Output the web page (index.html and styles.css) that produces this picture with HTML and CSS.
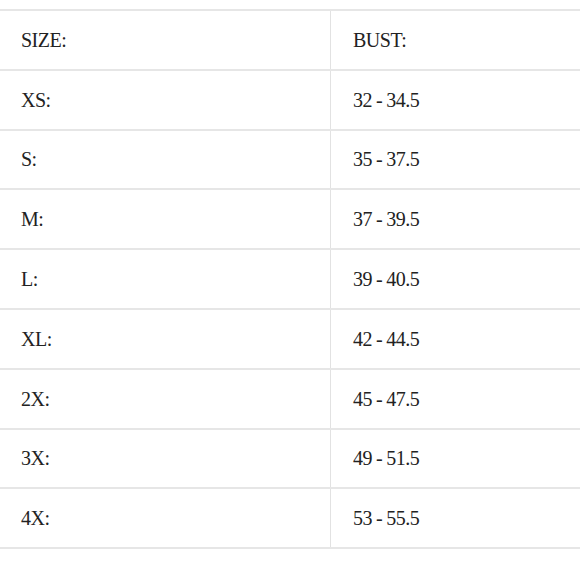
FILE: index.html
```html
<!DOCTYPE html>
<html>
<head>
<meta charset="utf-8">
<link rel="stylesheet" href="styles.css">
</head>
<body>
<div class="chart">
  <div class="row"><div class="cell size">SIZE:</div><div class="cell bust">BUST:</div></div>
  <div class="row"><div class="cell size">XS:</div><div class="cell bust">32 - 34.5</div></div>
  <div class="row"><div class="cell size">S:</div><div class="cell bust">35 - 37.5</div></div>
  <div class="row"><div class="cell size">M:</div><div class="cell bust">37 - 39.5</div></div>
  <div class="row"><div class="cell size">L:</div><div class="cell bust">39 - 40.5</div></div>
  <div class="row"><div class="cell size">XL:</div><div class="cell bust">42 - 44.5</div></div>
  <div class="row"><div class="cell size">2X:</div><div class="cell bust">45 - 47.5</div></div>
  <div class="row"><div class="cell size">3X:</div><div class="cell bust">49 - 51.5</div></div>
  <div class="row"><div class="cell size">4X:</div><div class="cell bust">53 - 55.5</div></div>
</div>
</body>
</html>
```
FILE: styles.css
```css
html, body {
  margin: 0;
  padding: 0;
  background: #ffffff;
}
body {
  padding-top: 9px;
  font-family: "Liberation Serif", "Times New Roman", serif;
  font-size: 20px;
  letter-spacing: -0.5px;
  word-spacing: -0.5px;
  color: #222222;
}
.chart {
  border-top: 2px solid #e6e6e6;
}
.row {
  display: grid;
  grid-template-columns: 330px 1fr;
  height: 57.8px;
  border-bottom: 2px solid #e6e6e6;
}
.cell {
  display: flex;
  align-items: center;
  padding-left: 21px;
  padding-top: 1px;
}
.bust {
  border-left: 1px solid #e2e2e2;
  padding-left: 22px;
}
```
